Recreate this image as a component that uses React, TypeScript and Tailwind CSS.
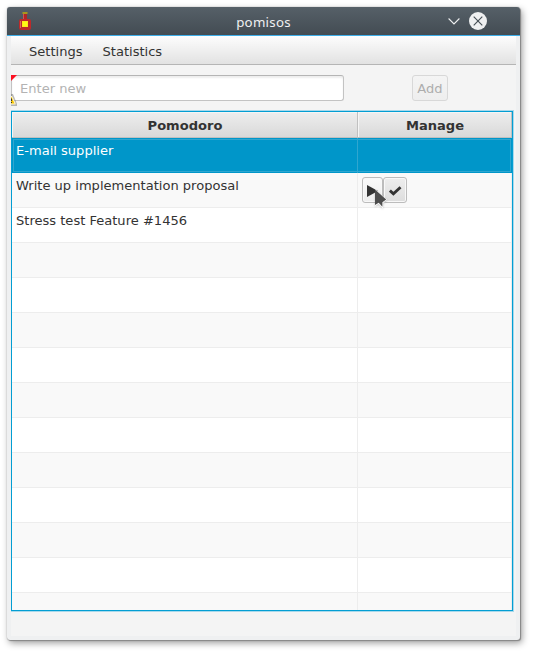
import React from "react";

const tasks = [
  "E-mail supplier",
  "Write up implementation proposal",
  "Stress test Feature #1456",
  ...Array<string>(11).fill(""),
];

function Bottle() {
  return (
    <svg className="-mt-px ml-3 h-[18px] w-3 shrink-0" viewBox="0 0 12 18">
      <rect x="4" y="1" width="4" height="7" fill="#b02626" />
      <rect x="0" y="7" width="12" height="11" rx="2" fill="#bd2a2a" />
      <rect x="3.500" y="0" width="5" height="2" fill="#a8981c" />
      <rect x="4" y="2" width="1" height="5" fill="#d35450" />
      <rect x="1" y="9" width="1" height="7" fill="#dd6661" />
      <rect x="3" y="9" width="6" height="6" fill="#ffe91b" />
      <rect x="4" y="10" width="4" height="4" fill="#fffb13" />
    </svg>
  );
}

function TitleBar() {
  return (
    <div className="flex h-[29px] shrink-0 items-center rounded-t-[3px] border-b border-[#3daee9] bg-linear-to-b from-[#566068] to-[#434c53]">
      <Bottle />
      <div className="flex-1 pl-[48px] pt-px text-center font-['Noto_Sans',sans-serif] text-[13.300px] leading-[18px] tracking-[0.25px] text-[#eff0f1]">pomisos</div>
      <svg className="mr-[9px] h-3 w-3" viewBox="0 0 12 12" fill="none" stroke="#eff0f1" strokeWidth="1.100">
        <path d="M.6 3.500 6 8.900l5.400-5.400" />
      </svg>
      <svg className="mr-[33px] h-[18px] w-[18px]" viewBox="0 0 18 18">
        <circle cx="9" cy="9" r="9" fill="#eff0f1" />
        <path d="m4.700 4.700 8.600 8.600m0-8.600-8.600 8.600" stroke="#475057" strokeWidth="1.150" />
      </svg>
    </div>
  );
}

function Header({ label, className }: { label: string; className: string }) {
  return (
    <div className={`flex items-center justify-center border-r border-b border-[#c0c0c0] bg-linear-to-b from-[#eeeeee] to-[#d9d9d9] pl-px pt-[2px] font-bold shadow-[inset_1px_1px_0_#f5f5f5] ${className}`}>
      {label}
    </div>
  );
}

function RowActions() {
  const button = "flex h-[26px] items-center justify-center rounded-[3px] border border-[#bcbcbc] shadow-[inset_0_0_0_1px_#f8f8f8]";
  return (
    <div className="relative ml-1 mt-1 flex">
      <div className={`${button} w-[21px] bg-linear-to-b from-[#fafafa] to-[#eeeeee]`}>
        <svg className="mt-[2px] h-3 w-[11px]" viewBox="0 0 11 12"><path d="M0 0v12l11-6z" fill="#333" /></svg>
      </div>
      <div className={`${button} w-6 bg-linear-to-b from-[#eeeeee] to-[#dddddd]`}>
        <svg className="mt-[2px] h-[10px] w-[13px]" viewBox="0 0 13 10" fill="none" stroke="#333" strokeWidth="2.900"><path d="m.9 4.600 3.500 3.200L11.500 1.300" /></svg>
      </div>
      <svg className="absolute left-[12px] top-[10px] h-[23px] w-[14px] drop-shadow-[0_1px_1px_#0003]" viewBox="0 0 14 23">
        <path d="M1 2v17l3.600-2.200 4.400 4.500V15.700l4-3z" fill="white" />
        <path d="M1 2.500v15.500l3.700-2.300 3.700 4.100V15.200l3.800-2.600z" fill="#4d4d4d" />
      </svg>
    </div>
  );
}

function Row({ text, index }: { text: string; index: number }) {
  if (index === 0) {
    return (
      <div className="relative flex h-[35px] shrink-0 bg-[#0096c9] text-white">
        <div className="w-[346px] border-r border-[#30a6cf] pl-1 pt-[5px] leading-4">{text}</div>
        <div className="pointer-events-none absolute inset-px border border-[#30a6cf]" />
      </div>
    );
  }
  return (
    <div className={`flex h-[35px] shrink-0 border-b border-[#ededed] ${index % 2 ? "bg-[#f9f9f9]" : "bg-white"}`}>
      <div className="w-[346px] border-r border-[#ededed] pl-1 pt-[5px] leading-4">{text}</div>
      <div className="w-[154px] border-r border-[#ededed]">{index === 1 && <RowActions />}</div>
    </div>
  );
}

export default function App() {
  return (
    <div className="h-[653px] w-[533px] overflow-hidden bg-white pl-[7px] pt-[7px] font-['DejaVu_Sans',sans-serif] text-[13.050px] text-[#333]">
      <div className="flex h-[633px] w-[513px] flex-col rounded-[3px] bg-[#eff0f1] shadow-[0_0_1px_#777,1px_1px_1px_#888,2px_3px_7px_#0006]">
        <TitleBar />
        <div className="mx-1 mb-1 flex min-h-0 flex-1 flex-col bg-[#f4f4f4]">
          <div className="flex h-[29px] shrink-0 items-center gap-5 border-b border-[#b5b5b5] bg-linear-to-b from-[#fdfdfd] to-[#e2e2e2] pl-[18px] pt-[3px]">
            <span>Settings</span>
            <span>Statistics</span>
          </div>
          <div className="relative flex h-[46px] shrink-0 items-start pt-[10px]">
            <div className="flex h-[26px] w-[333px] items-center rounded-[3px] border border-[#c3c3c3] border-t-[#b5b5b5] bg-white pl-2 pt-px text-[#b3b3b3] shadow-[inset_0_2px_2px_#eee]">Enter new</div>
            <div className="ml-[68px] flex h-[26px] w-9 items-center justify-center rounded-[3px] border border-[#d8d8d8] bg-linear-to-b from-[#f4f4f4] to-[#eeeeee] pt-px text-[#adadad]">Add</div>
            <svg className="absolute left-0 top-[10px] h-[31px] w-[6px]" viewBox="0 0 6 31">
              <path d="M0 0h6L0 6z" fill="#fc1022" />
              <path d="M0 19h2l4 10v2H0z" fill="#555" opacity=".4" />
              <path d="M0 21h1l3.500 7v1.500H0z" fill="#fff5cc" />
              <path d="M0 22h.5l3 6.500H0z" fill="#f7c600" />
              <path d="M0 23.500h1V26H0zm0 3.500h1v1H0z" fill="#333" />
            </svg>
          </div>
          <div className="flex h-[500px] w-[502px] shrink-0 flex-col overflow-hidden border border-[#039ed3] bg-white shadow-[0_0_0_1px_#a9d9eb] [clip-path:inset(-1px_-1px_-1px_0)]">
            <div className="flex h-[26px] shrink-0">
              <Header label="Pomodoro" className="w-[346px]" />
              <Header label="Manage" className="w-[154px]" />
            </div>
            {tasks.map((text, index) => <Row key={index} text={text} index={index} />)}
          </div>
        </div>
      </div>
    </div>
  );
}
